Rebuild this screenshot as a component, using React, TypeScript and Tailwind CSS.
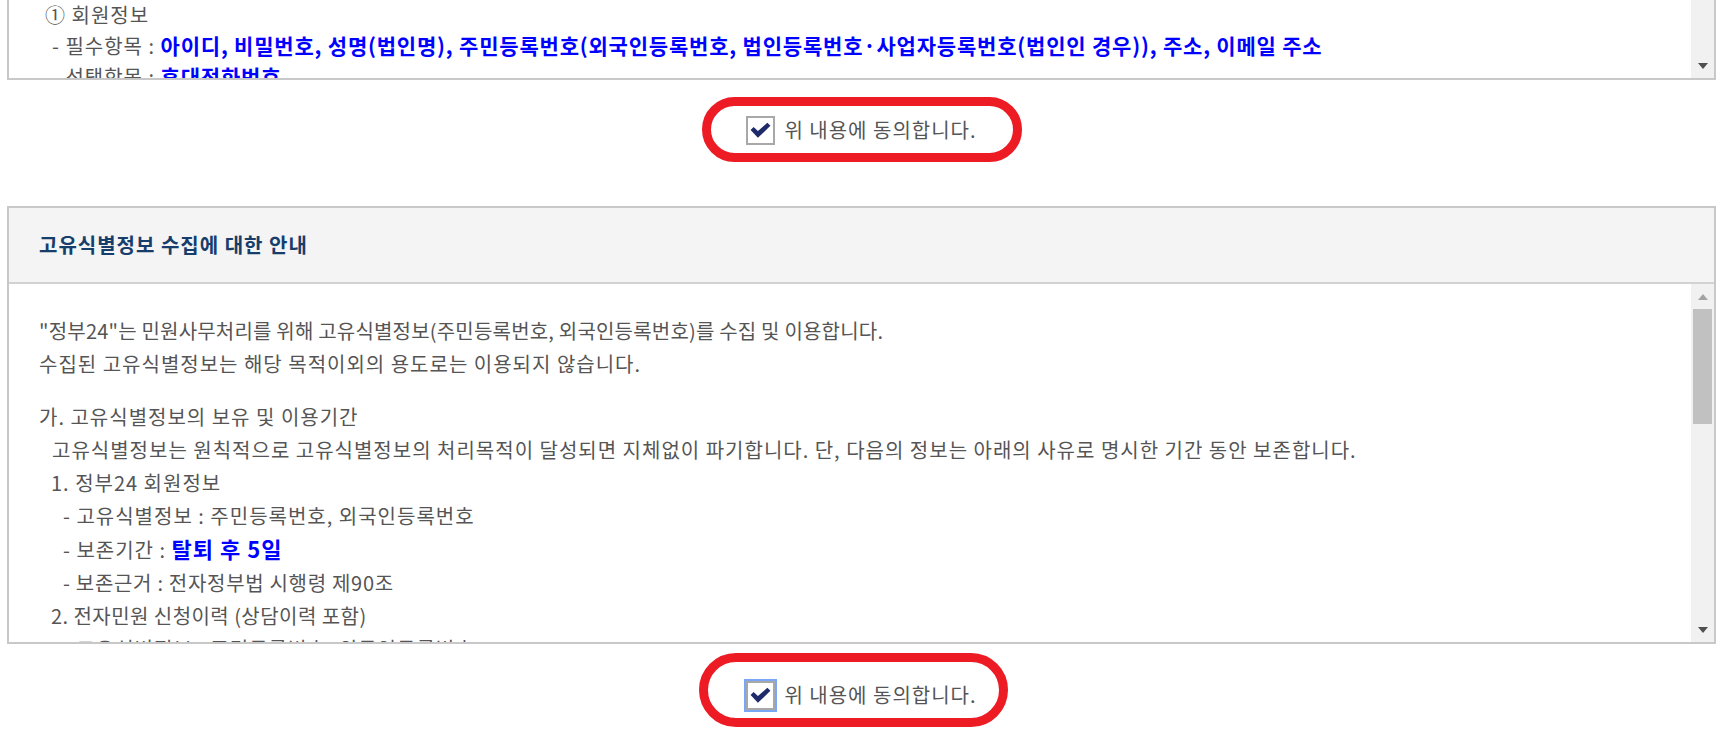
import React from 'react';

// Fake scrollbar column drawn next to a clipped text area
const ScrollTrack: React.FC<{ showTop?: boolean; thumb?: boolean }> = ({ showTop = true, thumb = false }) => (
    <div className="flex w-[23px] shrink-0 flex-col bg-[#f1f1f1]">
        {showTop && (
            <div className="flex h-[25px] items-center justify-center">
                <span className="h-0 w-0 border-x-[5px] border-b-[6px] border-x-transparent border-b-[#a3a3a3]" />
            </div>
        )}
        {thumb && <div className="mx-[2px] h-[115px] bg-[#c1c1c1]" />}
        <div className="flex-1" />
        <div className="flex h-[25px] items-center justify-center">
            <span className="h-0 w-0 border-x-[5px] border-t-[6px] border-x-transparent border-t-[#505050]" />
        </div>
    </div>
);

const CheckBox: React.FC<{ focused?: boolean }> = ({ focused }) => (
    <span
        className={
            focused
                ? 'flex h-[29px] w-[29px] shrink-0 items-center justify-center border-2 border-[#a8a8a8] bg-white outline-2 outline-[#7aa7f5]'
                : 'flex h-[29px] w-[29px] shrink-0 items-center justify-center border-2 border-[#a8a8a8] bg-white'
        }
    >
        <svg viewBox="0 0 29 29" className="h-[29px] w-[29px]">
            <polygon points="3,14 6.5,10.5 11.5,15 22.5,5.5 26,9 11.5,23" fill="#1f2a6b" />
        </svg>
    </span>
);

const AgreeRow: React.FC<{ second?: boolean }> = ({ second }) => (
    <div className="flex justify-center">
        <label className="relative flex items-center gap-[9px] text-[20px] leading-[30px] text-[#555]">
            <CheckBox focused={second} />
            <span>위 내용에 동의합니다.</span>
            {/* red hand-drawn highlight */}
            {second ? (
                <span className="pointer-events-none absolute -top-[27px] -bottom-[17px] -left-[47px] -right-[31px] rounded-full border-[9px] border-[#ed1c24]" />
            ) : (
                <span className="pointer-events-none absolute -top-[18px] -bottom-[17px] -left-[44px] -right-[45px] rounded-full border-[9px] border-[#ed1c24]" />
            )}
        </label>
    </div>
);

export default function App() {
    return (
        <div className="min-h-screen w-full bg-white pl-[7px] pr-[6px] font-['Noto_Sans_CJK_KR','Liberation_Sans',sans-serif] tracking-[1px] text-[#555]">
            {/* Previous agreement box (scrolled, top cut off) */}
            <div className="flex h-[80px] border-x-2 border-b-2 border-[#c8c8c8]">
                <div className="flex-1 overflow-hidden pl-[30px] text-[20px] leading-[30px]">
                    <div className="ml-[6px]">① 회원정보</div>
                    <div className="ml-[13px] whitespace-nowrap">
                        - 필수항목 :{' '}
                        <b className="text-[21px] font-bold tracking-[0.8px] text-[#0000ff]">
                            아이디, 비밀번호, 성명(법인명), 주민등록번호(외국인등록번호, 법인등록번호·사업자등록번호(법인인 경우)), 주소, 이메일 주소
                        </b>
                    </div>
                    <div className="ml-[13px] whitespace-nowrap">
                        - 선택항목 : <b className="text-[21px] font-bold tracking-[0.8px] text-[#0000ff]">휴대전화번호</b>
                    </div>
                </div>
                <ScrollTrack showTop={false} />
            </div>

            <div className="pt-[35px]">
                <AgreeRow />
            </div>

            {/* 고유식별정보 box */}
            <div className="mt-[61px] border-2 border-[#c8c8c8]">
                <div className="flex h-[76px] items-center border-b-2 border-[#d2d2d2] bg-[#f4f4f4] pl-[30px]">
                    <h3 className="text-[20px] font-bold text-[#173d6b]">고유식별정보 수집에 대한 안내</h3>
                </div>
                <div className="flex h-[358px]">
                    <div className="flex-1 overflow-hidden pl-[30px] pt-[30px] text-[20px] leading-[33px]">
                        <p className="tracking-[0.2px]">"정부24"는 민원사무처리를 위해 고유식별정보(주민등록번호, 외국인등록번호)를 수집 및 이용합니다.</p>
                        <p>수집된 고유식별정보는 해당 목적이외의 용도로는 이용되지 않습니다.</p>
                        <div className="mt-[20px]">
                            <p>가. 고유식별정보의 보유 및 이용기간</p>
                            <p className="ml-[13px]">
                                고유식별정보는 원칙적으로 고유식별정보의 처리목적이 달성되면 지체없이 파기합니다. 단, 다음의 정보는 아래의 사유로 명시한 기간 동안 보존합니다.
                            </p>
                            <p className="ml-[12px]">1. 정부24 회원정보</p>
                            <p className="ml-[24px]">- 고유식별정보 : 주민등록번호, 외국인등록번호</p>
                            <p className="ml-[24px]">
                                - 보존기간 : <b className="text-[22px] font-bold text-[#0000ff]">탈퇴 후 5일</b>
                            </p>
                            <p className="ml-[24px] tracking-[0.7px]">- 보존근거 : 전자정부법 시행령 제90조</p>
                            <p className="ml-[12px] tracking-[0.45px]">2. 전자민원 신청이력 (상담이력 포함)</p>
                            <p className="ml-[24px]">- 고유식별정보 : 주민등록번호, 외국인등록번호</p>
                        </div>
                    </div>
                    <ScrollTrack thumb />
                </div>
            </div>

            <div className="pt-[36px]">
                <AgreeRow second />
            </div>
        </div>
    );
}
